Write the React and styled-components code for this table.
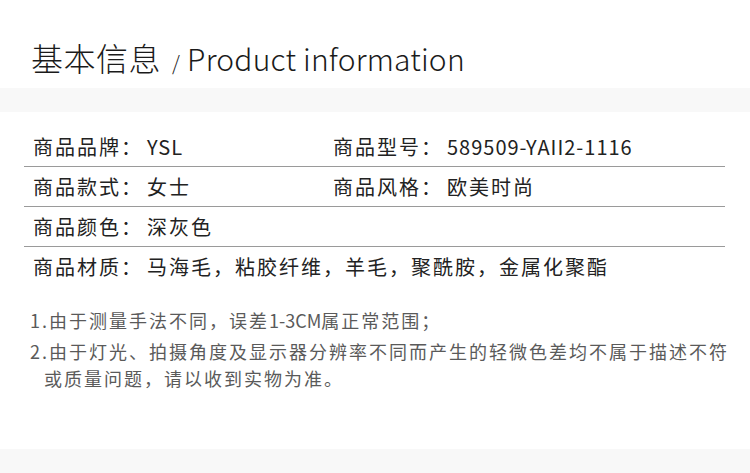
import React from 'react';
import styled, { createGlobalStyle } from 'styled-components';

const GlobalStyle = createGlobalStyle`
  body {
    margin: 0;
    background: #ffffff;
    font-family: "Noto Sans CJK SC", "Noto Sans", sans-serif;
  }
`;

const Page = styled.div`
  width: 750px;
  height: 473px;
  background: #ffffff;
  overflow: hidden;
`;

const Header = styled.div`
  height: 88px;
  box-sizing: border-box;
  padding: 36px 0 0 31px;
  display: flex;
  align-items: baseline;
  color: #1a1a1a;
`;

const TitleCn = styled.span`
  font-size: 32px;
  line-height: 40px;
  font-weight: 300;
  letter-spacing: 0.5px;
`;

const TitleEn = styled.span`
  font-size: 30px;
  font-weight: 300;
  margin-left: 11px;
  letter-spacing: 0.2px;

  small {
    font-size: 20px;
    margin-right: 7px;
  }
`;

const Band = styled.div`
  height: ${(p) => p.h}px;
  background: #f8f8f8;
`;

const Table = styled.div`
  margin: 0 25px 0 24px;
  padding-top: 15px;
`;

const Row = styled.div`
  display: grid;
  grid-template-columns: 300px 1fr;
  height: 39px;
  align-items: center;
  padding-left: 9px;
  border-bottom: ${(p) => (p.last ? 'none' : '1px solid #9a9a9a')};
`;

const Cell = styled.div`
  display: flex;
  align-items: center;
  font-size: 20px;
  letter-spacing: 2px;
  color: #222;
  white-space: nowrap;
`;

const Label = styled.span`
  width: 114px;
  flex: none;
`;

const Latin = styled.span`
  letter-spacing: ${(p) => p.ls}px;
`;

const Notes = styled.div`
  padding: 21px 0 0 30px;
  height: 163px;
  box-sizing: border-box;
  color: #5a5a5a;
  font-size: 18px;
  letter-spacing: 2px;
`;

const Note = styled.p`
  margin: 0 0 4px 0;
  line-height: 27px;
  padding-left: 14px;
  text-indent: -14px;
  width: 700px;
`;

const rows = [
  [['商品品牌：', 'YSL', true], ['商品型号：', '589509-YAII2-1116', true]],
  [['商品款式：', '女士'], ['商品风格：', '欧美时尚']],
  [['商品颜色：', '深灰色']],
  [['商品材质：', '马海毛，粘胶纤维，羊毛，聚酰胺，金属化聚酯']],
];

export default function App() {
  return (
    <Page>
      <GlobalStyle />
      <Header>
        <TitleCn>基本信息</TitleCn>
        <TitleEn>
          <small>/</small>Product information
        </TitleEn>
      </Header>
      <Band h={24} />
      <Table>
        {rows.map((cells, i) => (
          <Row key={i} last={i === rows.length - 1}>
            {cells.map(([label, value, latin]) => (
              <Cell key={label}>
                <Label>{label}</Label>
                {latin ? <Latin ls={1}>{value}</Latin> : <span>{value}</span>}
              </Cell>
            ))}
          </Row>
        ))}
      </Table>
      <Notes>
        <Note>
          1.由于测量手法不同，误差<Latin ls={0}>1-3CM</Latin>属正常范围；
        </Note>
        <Note>2.由于灯光、拍摄角度及显示器分辨率不同而产生的轻微色差均不属于描述不符或质量问题，请以收到实物为准。</Note>
      </Notes>
      <Band h={24} />
    </Page>
  );
}
